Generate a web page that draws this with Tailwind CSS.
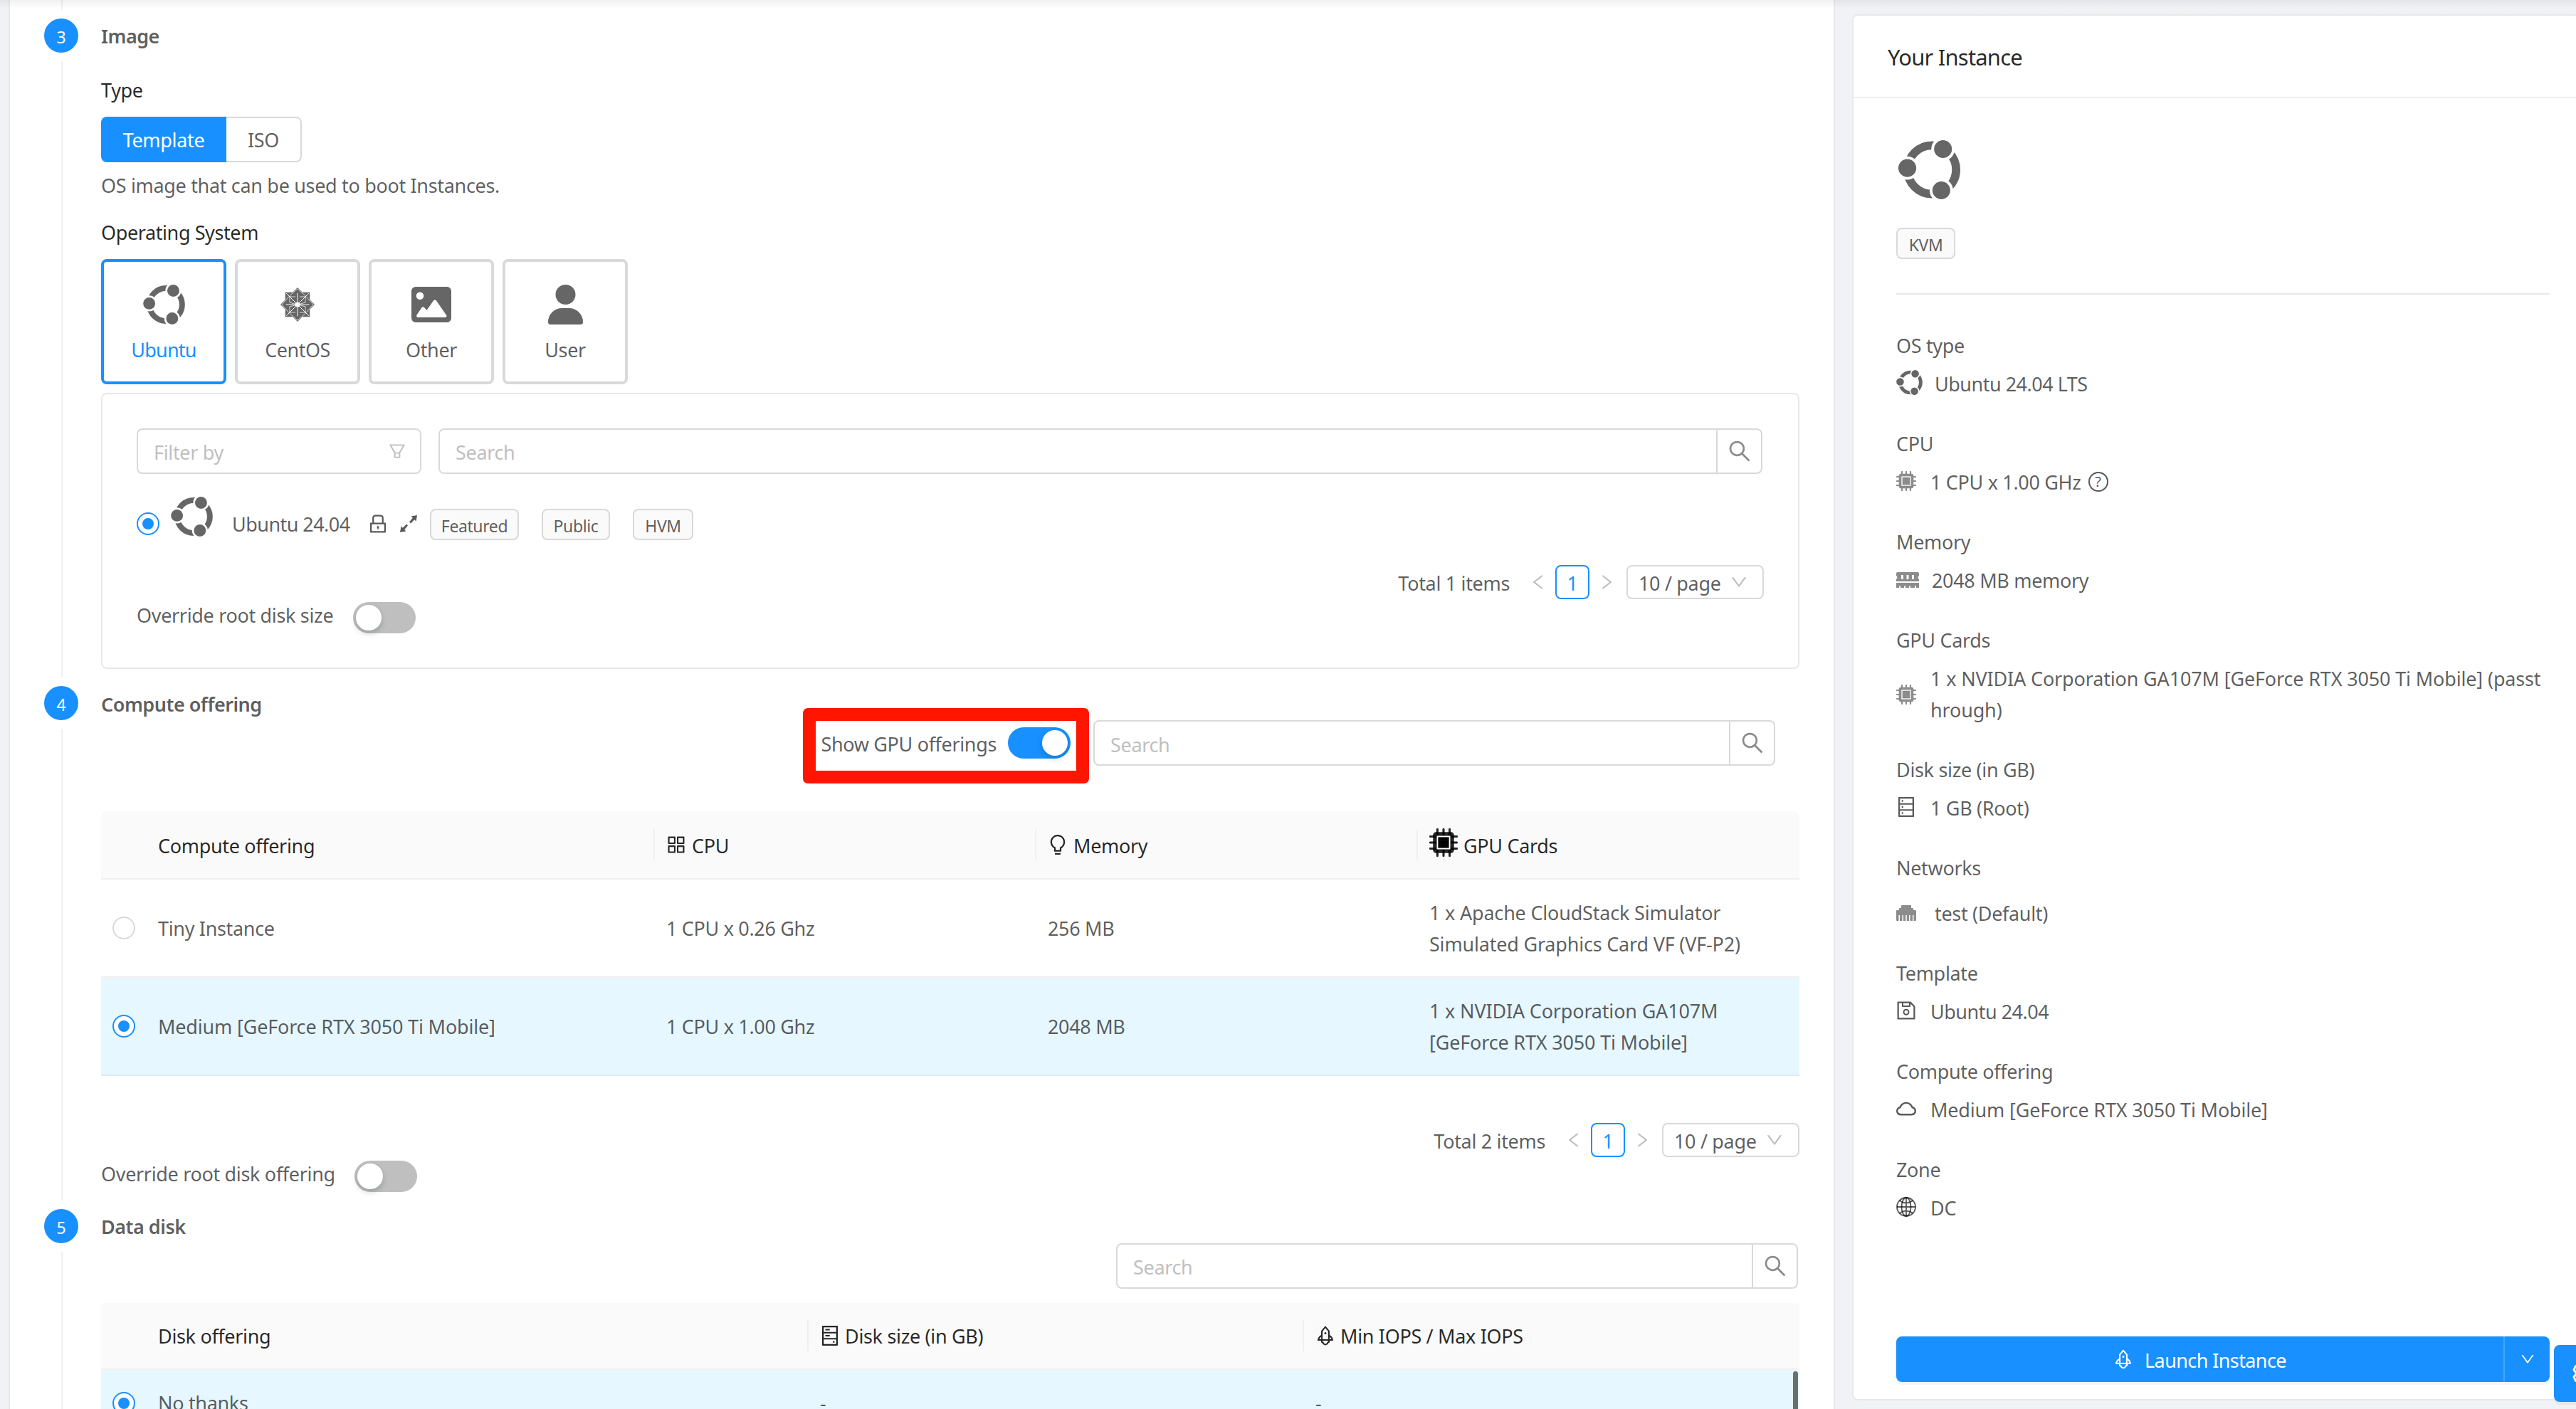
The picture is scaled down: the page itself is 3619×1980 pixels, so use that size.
<!DOCTYPE html>
<html lang="en">

<head>
  <meta charset="UTF-8" />
  <meta name="viewport" content="width=device-width, initial-scale=1.0" />
  <title>New Instance</title>
  <!--Tailwind CSS-->
  <script src="https://cdn.jsdelivr.net/npm/@tailwindcss/browser@4"></script>
</head>

<body
  class="relative flex h-[1980px] w-[3619px] overflow-hidden bg-[#f0f2f5] font-['Noto_Sans','Open_Sans',sans-serif] text-[27px] leading-[44px] tracking-[-0.33px] text-black/65">

  <!-- Icon sprite -->
  <svg class="hidden">
    <symbol id="ubuntu" viewBox="0 0 111 106">
      <circle cx="60" cy="53" r="43.5" fill="none" stroke="currentColor" stroke-width="15" />
      <g fill="currentColor" stroke="#fff" stroke-width="5">
        <circle cx="16" cy="50" r="18.5" />
        <circle cx="80" cy="16" r="18.5" />
        <circle cx="77" cy="90" r="18.5" />
      </g>
    </symbol>
    <symbol id="centos" viewBox="0 0 100 100">
      <path fill="currentColor" d="M50 0 64 14H86V36L100 50 86 64V86H64L50 100 36 86H14V64L0 50 14 36V14H36Z" />
      <g fill="none" stroke="#fff">
        <path d="M50 16V84M16 50H84M17 17 83 83M83 17 17 83" stroke-width="2" />
        <path d="M50 4 27 24V44L50 50 73 44V24ZM50 96 27 76V56L50 50 73 56V76ZM4 50 24 27H44M96 50 76 27H56M4 50 24 73H44M96 50 76 73H56" stroke-width="1.5" />
      </g>
      <circle cx="50" cy="50" r="7" fill="#fff" />
    </symbol>
    <symbol id="picture" viewBox="0 0 56 50">
      <path fill="currentColor" fill-rule="evenodd"
        d="M6 0H50a6 6 0 0 1 6 6V44a6 6 0 0 1-6 6H6a6 6 0 0 1-6-6V6A6 6 0 0 1 6 0ZM12 7.5a5.3 5.3 0 1 0 0 10.6a5.3 5.3 0 1 0 0-10.6ZM9 43H47a2 2 0 0 0 1.8-3.4L35 19.5a2.4 2.4 0 0 0-4 0L21.5 33 18 29a2.4 2.4 0 0 0-3.5.2L7.5 39.6A2.2 2.2 0 0 0 9 43Z" />
    </symbol>
    <symbol id="person" viewBox="0 0 49 56">
      <path fill="currentColor"
        d="M24.5 0a14 14 0 1 1 0 28a14 14 0 1 1 0-28ZM19.5 33h10A19.5 19.5 0 0 1 49 52.5A3.5 3.5 0 0 1 45.5 56H3.5A3.5 3.5 0 0 1 0 52.5A19.5 19.5 0 0 1 19.5 33Z" />
    </symbol>
    <symbol id="chip" viewBox="0 0 84 84">
      <path stroke="currentColor" stroke-width="6.5" stroke-linecap="round" d="M24 3V81M42 3V81M60 3V81M3 24H81M3 42H81M3 60H81" />
      <rect x="11" y="11" width="62" height="62" rx="9" fill="currentColor" />
      <rect x="24" y="24" width="36" height="36" fill="currentColor" stroke="#fff" stroke-width="4" />
    </symbol>
    <symbol id="ram" viewBox="0 0 32 22">
      <path fill="currentColor" fill-rule="evenodd"
        d="M2 0H30A2 2 0 0 1 32 2V5a3 3 0 0 0 0 5V13H0V10A3 3 0 0 0 0 5V2A2 2 0 0 1 2 0ZM7 4V10H10V4ZM14.5 4V10H17.5V4ZM22 4V10H25V4ZM0 15H32V22H28V19.5H26V22H20V19.5H18V22H13V19.5H11V22H6V19.5H4V22H0Z" />
    </symbol>
    <symbol id="ethernet" viewBox="0 0 28 22">
      <path fill="currentColor"
        d="M8 0H20A1 1 0 0 1 21 1V4H23A1 1 0 0 1 24 5V7H27A1 1 0 0 1 28 8V21A1 1 0 0 1 27 22H24.5V14H23V22H19.5V14H18V22H14.8V14H13.2V22H10V14H8.5V22H5V14H3.5V22H1A1 1 0 0 1 0 21V8A1 1 0 0 1 1 7H4V5A1 1 0 0 1 5 4H7V1A1 1 0 0 1 8 0Z" />
    </symbol>
    <symbol id="globe" viewBox="0 0 28 28">
      <g fill="none" stroke="currentColor" stroke-width="1.8">
        <circle cx="14" cy="14" r="13" />
        <ellipse cx="14" cy="14" rx="6.5" ry="13" />
        <path d="M14 1V27M1 14H27M4.5 5Q14 12 23.5 5M4.5 23Q14 16 23.5 23" />
      </g>
    </symbol>
    <symbol id="expand" viewBox="0 0 24 24">
      <path fill="currentColor" d="M24 0 22.5 8.5 20.2 6.2 15 11.4 13 9.4 17.800 3.800 15.500 1.500ZM0 24 1.500 15.500 3.800 17.800 9 12.600 11 14.600 6.200 20.200 8.500 22.500Z" />
    </symbol>
    <symbol id="search" viewBox="64 64 896 896">
      <path fill="currentColor"
        d="M909.6 854.5L649.9 594.8C690.2 542.7 712 479 712 412c0-80.2-31.3-155.4-87.9-212.1-56.6-56.7-132-87.9-212.1-87.9s-155.5 31.3-212.1 87.9C143.2 256.5 112 331.8 112 412c0 80.1 31.3 155.5 87.9 212.1C256.5 680.8 331.8 712 412 712c67 0 130.6-21.8 182.7-62l259.7 259.6a8.2 8.2 0 0011.6 0l43.6-43.5a8.2 8.2 0 000-11.6zM570.4 570.4C528 612.7 471.8 636 412 636s-116-23.3-158.4-65.6C211.3 528 188 471.8 188 412s23.3-116.1 65.6-158.4C296 211.3 352.2 188 412 188s116.1 23.2 158.4 65.6S636 352.2 636 412s-23.3 116.1-65.6 158.4z" />
    </symbol>
    <symbol id="filter" viewBox="64 64 896 896">
      <path fill="currentColor"
        d="M880.1 154H143.9c-24.5 0-39.8 26.7-27.5 48L349 597.4V838c0 17.7 14.2 32 31.8 32h262.4c17.6 0 31.8-14.3 31.8-32V597.4L907.7 202c12.2-21.3-3.1-48-27.6-48zM603.4 798H420.6V642h182.9v156zm9.6-236.6l-9.5 16.6h-183l-9.5-16.6L212.7 226h598.6L613 561.4z" />
    </symbol>
    <symbol id="lock" viewBox="64 64 896 896">
      <path fill="currentColor"
        d="M832 464h-68V240c0-70.7-57.3-128-128-128H388c-70.7 0-128 57.3-128 128v224h-68c-17.7 0-32 14.3-32 32v384c0 17.7 14.3 32 32 32h640c17.7 0 32-14.3 32-32V496c0-17.7-14.3-32-32-32zM332 240c0-30.9 25.1-56 56-56h248c30.9 0 56 25.1 56 56v224H332V240zm460 600H232V536h560v304zM484 701v53c0 4.4 3.6 8 8 8h40c4.4 0 8-3.6 8-8v-53a48.01 48.01 0 10-56 0z" />
    </symbol>
    <symbol id="left" viewBox="64 64 896 896">
      <path fill="currentColor"
        d="M724 218.3V141c0-6.7-7.7-10.4-12.9-6.3L260.3 486.8a31.86 31.86 0 000 50.3l450.8 352.1c5.3 4.1 12.9.4 12.9-6.3v-77.3c0-4.9-2.3-9.6-6.1-12.6l-360-281 360-281.1c3.8-3 6.1-7.7 6.1-12.6z" />
    </symbol>
    <symbol id="right" viewBox="64 64 896 896">
      <path fill="currentColor"
        d="M765.7 486.8L314.9 134.7A7.97 7.97 0 00302 141v77.3c0 4.9 2.3 9.6 6.1 12.6l360 281.1-360 281.1c-3.9 3-6.1 7.7-6.1 12.6V883c0 6.7 7.7 10.4 12.9 6.3l450.8-352.1a31.96 31.96 0 000-50.4z" />
    </symbol>
    <symbol id="down" viewBox="64 64 896 896">
      <path fill="currentColor"
        d="M884 256h-75c-5.1 0-9.9 2.5-12.9 6.6L512 654.2 227.9 262.6c-3-4.1-7.8-6.6-12.9-6.6h-75c-6.5 0-10.3 7.4-6.5 12.7l352.6 486.1c12.8 17.6 39 17.6 51.7 0l352.6-486.1c3.9-5.3.1-12.7-6.4-12.7z" />
    </symbol>
    <symbol id="appstore" viewBox="64 64 896 896">
      <path fill="none" stroke="currentColor" stroke-width="68" stroke-linejoin="round"
        d="M178 178H446V446H178ZM578 178H846V446H578ZM178 578H446V846H178ZM578 578H846V846H578Z" />
    </symbol>
    <symbol id="bulb" viewBox="64 64 896 896">
      <path fill="currentColor"
        d="M632 888H392c-4.4 0-8 3.6-8 8v32c0 17.7 14.3 32 32 32h192c17.7 0 32-14.3 32-32v-32c0-4.4-3.6-8-8-8zM512 64c-181.1 0-328 146.9-328 328 0 121.4 66 227.4 164 284.1V792c0 17.7 14.3 32 32 32h264c17.7 0 32-14.3 32-32V676.1c98-56.7 164-162.7 164-284.1 0-181.1-146.9-328-328-328zm127.9 549.8L604 634.6V752H420V634.6l-35.9-20.8C305.4 568.3 256 484.5 256 392c0-141.4 114.6-256 256-256s256 114.6 256 256c0 92.5-49.4 176.3-128.1 221.8z" />
    </symbol>
    <symbol id="hdd" viewBox="64 64 896 896">
      <path fill="currentColor"
        d="M832 64H192c-17.7 0-32 14.3-32 32v832c0 17.7 14.3 32 32 32h640c17.7 0 32-14.3 32-32V96c0-17.7-14.3-32-32-32zm-600 72h560v208H232V136zm560 480H232V408h560v208zm0 272H232V680h560v208zM496 208H312c-4.4 0-8 3.6-8 8v48c0 4.4 3.6 8 8 8h184c4.4 0 8-3.6 8-8v-48c0-4.4-3.6-8-8-8zM312 544h184c4.4 0 8-3.6 8-8v-48c0-4.4-3.6-8-8-8H312c-4.4 0-8 3.6-8 8v48c0 4.4 3.6 8 8 8zm328 244a40 40 0 1080 0 40 40 0 10-80 0z" />
    </symbol>
    <symbol id="database" viewBox="64 64 896 896">
      <path fill="currentColor"
        d="M832 64H192c-17.7 0-32 14.3-32 32v832c0 17.7 14.3 32 32 32h640c17.7 0 32-14.3 32-32V96c0-17.7-14.3-32-32-32zm-600 72h560v208H232V136zm560 480H232V408h560v208zm0 272H232V680h560v208zM304 240a40 40 0 1080 0 40 40 0 10-80 0zm0 272a40 40 0 1080 0 40 40 0 10-80 0zm0 272a40 40 0 1080 0 40 40 0 10-80 0z" />
    </symbol>
    <symbol id="rocket" viewBox="64 64 896 896">
      <path fill="currentColor"
        d="M864 736c0-111.6-65.4-208-160-252.9V317.3c0-15.1-5.3-29.7-15.1-41.2L536.5 95.4C530.1 87.8 521 84 512 84s-18.1 3.8-24.5 11.4L335.1 276.1a63.97 63.97 0 00-15.1 41.2v165.8C225.4 528 160 624.4 160 736h156.5c-2.3 7.2-3.5 15-3.5 23.8 0 22.1 7.6 43.7 21.4 60.8a97.2 97.2 0 0043.1 30.6c23.1 54 75.6 88.8 134.5 88.8 29.1 0 57.3-8.6 81.4-24.8 23.6-15.8 41.9-37.9 53-64a97 97 0 0043.1-30.5 97.52 97.52 0 0021.4-60.8c0-8.4-1.1-16.4-3.1-23.8H864zM762.3 621.4c9.4 14.6 17 30.3 22.5 46.6H700V558.7a211.6 211.6 0 0162.3 62.7zM388 483.1V318.8l124-147 124 147V668H388V483.1zM239.2 668c5.5-16.3 13.1-32 22.5-46.6 16.3-25.2 37.5-46.5 62.3-62.7V668h-84.8zm388.9 116.2c-5.2 3-11.2 4.2-17.1 3.4l-19.5-2.4-2.8 19.4c-5.4 37.9-38.4 66.5-76.7 66.5-38.3 0-71.3-28.6-76.7-66.5l-2.8-19.5-19.5 2.5a27.7 27.7 0 01-17.1-3.5c-8.7-5-14.1-14.3-14.1-24.4 0-10.6 5.9-19.4 14.6-23.8h231.3c8.8 4.5 14.6 13.3 14.6 23.8-.1 10.2-5.5 19.6-14.2 24.5zM464 400a48 48 0 1096 0 48 48 0 10-96 0z" />
    </symbol>
    <symbol id="save" viewBox="64 64 896 896">
      <path fill="currentColor"
        d="M893.3 293.3L730.7 130.7c-7.5-7.5-16.7-13-26.7-16V112H144c-17.7 0-32 14.3-32 32v736c0 17.7 14.3 32 32 32h736c17.7 0 32-14.3 32-32V338.5c0-17-6.7-33.2-18.7-45.2zM384 184h256v104H384V184zm456 656H184V184h136v136c0 17.7 14.3 32 32 32h320c17.7 0 32-14.3 32-32V205.8l136 136V840zM512 442c-79.5 0-144 64.5-144 144s64.5 144 144 144 144-64.5 144-144-64.5-144-144-144zm0 224c-44.2 0-80-35.8-80-80s35.8-80 80-80 80 35.8 80 80-35.8 80-80 80z" />
    </symbol>
    <symbol id="cloud" viewBox="64 64 896 896">
      <path fill="currentColor"
        d="M811.4 418.7C765.6 297.9 648.9 212 512.2 212S258.8 297.8 213 418.6C127.3 441.1 64 519.1 64 612c0 110.5 89.5 200 199.9 200h496.2C870.5 812 960 722.5 960 612c0-92.7-63.1-170.7-148.6-193.3zm36.3 281a123.07 123.07 0 01-87.6 36.3H263.9c-33.1 0-64.2-12.9-87.6-36.3A123.3 123.3 0 01140 612c0-28 9.1-54.3 26.2-76.3a125.7 125.7 0 0166.1-43.7l37.9-9.9 13.9-36.6c8.6-22.8 20.6-44.1 35.7-63.4a245.6 245.6 0 0152.4-49.9c41.1-28.9 89.5-44.2 140-44.2s98.9 15.3 140 44.2c19.9 14 37.5 30.8 52.4 49.9 15.1 19.3 27.1 40.7 35.7 63.4l13.8 36.5 37.8 10c54.3 14.5 92.1 63.8 92.1 120 0 33.1-12.9 64.3-36.3 87.7z" />
    </symbol>
    <symbol id="gear" viewBox="0 0 40 40">
      <g fill="none" stroke="currentColor" stroke-width="3">
        <path d="M15 3.5H25L26.5 9 30 11 35.5 9.5 38 15 34 20 38 25 35.5 30.5 30 29 26.5 31 25 36.5H15L13.5 31 10 29 4.500 30.500 2 25 6 20 2 15 4.500 9.500 10 11 13.500 9Z" stroke-linejoin="round" />
        <circle cx="20" cy="20" r="6" />
      </g>
    </symbol>
  </svg>

  <!-- Wizard -->
  <main class="ml-3 flex h-[1980px] w-[2566px] shrink-0 flex-col overflow-hidden border-x-2 border-[#e8e8e8] bg-white">
    <div class="ml-[72px] h-[14px] w-0.5 shrink-0 bg-[#f0f0f0]"></div>

    <!-- Step 3 -->
    <section class="mt-3 flex h-[938px] shrink-0 pr-12 pl-12">
      <div class="flex w-12 shrink-0 flex-col items-center">
        <div class="flex size-12 shrink-0 items-center justify-center rounded-full bg-[#1890ff] pt-1 text-[23px] text-white">3</div>
        <div class="my-3 w-0.5 grow translate-x-px bg-[#f0f0f0]"></div>
      </div>
      <div class="ml-8 w-[2386px] pt-[2.5px]">
        <h3 class="font-semibold tracking-[-0.5px]">Image</h3>
        <div class="mt-8 text-black/85">Type</div>
        <div class="mt-[15.5px] flex h-16">
          <button class="w-[176px] rounded-l-lg bg-[#1890ff] pt-0.5 text-white">Template</button>
          <button class="w-[106px] rounded-r-lg border-2 border-l-0 border-[#d9d9d9] pt-0.5">ISO</button>
        </div>
        <p class="mt-[10.5px]">OS image that can be used to boot Instances.</p>
        <div class="mt-[22px] tracking-[-0.4px] text-black/85">Operating System</div>
        <div class="mt-[15.5px] flex gap-3">
          <div class="flex size-[176px] flex-col items-center rounded-lg border-4 border-[#1890ff] pt-8">
            <svg class="h-14 w-[59px] text-[#666]"><use href="#ubuntu" /></svg>
            <span class="mt-3.5 tracking-[-0.8px] text-[#1890ff]">Ubuntu</span>
          </div>
          <div class="flex size-[176px] flex-col items-center rounded-lg border-4 border-[#d9d9d9] pt-8">
            <svg class="my-1 size-12 text-[#666]"><use href="#centos" /></svg>
            <span class="mt-3.5 tracking-[-0.5px]">CentOS</span>
          </div>
          <div class="flex size-[176px] flex-col items-center rounded-lg border-4 border-[#d9d9d9] pt-8">
            <svg class="my-[3px] h-[50px] w-14 text-[#666]"><use href="#picture" /></svg>
            <span class="mt-3.5">Other</span>
          </div>
          <div class="flex size-[176px] flex-col items-center rounded-lg border-4 border-[#d9d9d9] pt-8">
            <svg class="h-14 w-[49px] text-[#666]"><use href="#person" /></svg>
            <span class="mt-3.5">User</span>
          </div>
        </div>

        <div class="mt-3 h-[388px] rounded-lg border-2 border-[#e8e8e8] px-12 pt-12">
          <div class="flex gap-6">
            <div class="flex h-16 w-[400px] items-center justify-between rounded-lg border-2 border-[#d9d9d9] pr-5 pl-[22px] text-[#bfbfbf]">
              <span class="pt-1">Filter by</span>
              <svg class="size-6"><use href="#filter" /></svg>
            </div>
            <div class="flex h-16 w-[1860px] rounded-lg border-2 border-[#d9d9d9]">
              <span class="grow pt-2.5 pl-[22px] text-[#bfbfbf]">Search</span>
              <div class="flex w-[63px] items-center justify-center border-l-2 border-[#d9d9d9] text-black/45">
                <svg class="size-8"><use href="#search" /></svg>
              </div>
            </div>
          </div>
          <div class="mt-8 flex h-24 items-start">
            <div class="mt-[22px] flex size-8 shrink-0 items-center justify-center rounded-full border-2 border-[#1890ff]">
              <div class="size-4 rounded-full bg-[#1890ff]"></div>
            </div>
            <svg class="ml-4 h-14 w-[59px] text-[#666]"><use href="#ubuntu" /></svg>
            <span class="mt-[17px] ml-[27px] w-[167px] tracking-[-0.55px] whitespace-nowrap">Ubuntu 24.04</span>
            <svg class="mt-6 ml-6 size-7"><use href="#lock" /></svg>
            <svg class="mt-[26px] ml-[17px] size-6"><use href="#expand" /></svg>
            <span class="mt-[17px] ml-[18px] h-11 w-[125px] rounded-lg border-2 border-[#d9d9d9] bg-[#fafafa] pt-0.5 text-center text-[23px] leading-10 tracking-[-0.4px]">Featured</span>
            <span class="mt-[17px] ml-8 h-11 w-24 rounded-lg border-2 border-[#d9d9d9] bg-[#fafafa] pt-0.5 text-center text-[23px] leading-10 tracking-[-0.4px]">Public</span>
            <span class="mt-[17px] ml-8 h-11 w-[85px] rounded-lg border-2 border-[#d9d9d9] bg-[#fafafa] pt-0.5 text-center text-[23px] leading-10 tracking-[-0.4px]">HVM</span>
          </div>
          <div class="flex h-12 items-center justify-end">
            <span class="mr-4 pt-1">Total 1 items</span>
            <span class="flex w-12 justify-center text-black/25"><svg class="size-6"><use href="#left" /></svg></span>
            <span class="h-12 w-12 rounded-lg border-2 border-[#1890ff] pt-0.5 text-center text-[#1890ff]">1</span>
            <span class="flex w-12 justify-center text-black/25"><svg class="size-6"><use href="#right" /></svg></span>
            <span class="ml-1 flex h-12 w-[193px] items-center justify-between rounded-lg border-2 border-[#d9d9d9] pr-[21px] pl-[15px]">
              <span class="pt-1">10 / page</span><svg class="size-6 text-black/25"><use href="#down" /></svg>
            </span>
          </div>
          <div class="flex">
            <span class="w-[304px] pt-px">Override root disk size</span>
            <span class="mt-1 h-11 w-[88px] rounded-full bg-black/25 p-1">
              <span class="block size-9 rounded-full bg-white shadow-[0_4px_8px_rgba(0,35,11,0.2)]"></span>
            </span>
          </div>
        </div>
      </div>
    </section>

    <!-- Step 4 -->
    <section class="flex h-[735px] shrink-0 pr-12 pl-12">
      <div class="flex w-12 shrink-0 flex-col items-center">
        <div class="flex size-12 shrink-0 items-center justify-center rounded-full bg-[#1890ff] pt-1 text-[23px] text-white">4</div>
        <div class="my-3 w-0.5 grow translate-x-px bg-[#f0f0f0]"></div>
      </div>
      <div class="ml-8 w-[2386px] pt-1">
        <h3 class="font-semibold tracking-[-0.5px]">Compute offering</h3>
        <div class="relative flex h-16 items-center justify-end pr-[34px]">
          <div class="absolute top-[-17px] left-[986px] h-[106px] w-[402px] rounded-[7px] border-[18px] border-[#ff1500]"></div>
          <span class="mr-4 pt-1 tracking-[-0.35px]">Show GPU offerings</span>
          <span class="mr-8 flex h-11 w-[88px] justify-end rounded-full bg-[#1890ff] p-1">
            <span class="block size-9 rounded-full bg-white shadow-[0_4px_8px_rgba(0,35,11,0.2)]"></span>
          </span>
          <div class="flex h-16 w-[958px] rounded-lg border-2 border-[#d9d9d9]">
            <span class="grow pt-[11px] pl-[22px] text-[#bfbfbf]">Search</span>
            <div class="flex w-[63px] items-center justify-center border-l-2 border-[#d9d9d9] text-black/45">
              <svg class="size-8"><use href="#search" /></svg>
            </div>
          </div>
        </div>

        <div class="mt-16">
          <div class="grid h-24 grid-cols-[64px_714px_536px_536px_536px] items-center rounded-t-lg border-b-2 border-[#f0f0f0] bg-[#fafafa] text-black/85">
            <span></span>
            <div class="flex h-11 items-center border-r-2 border-[#f0f0f0] pt-1 pl-4">Compute offering</div>
            <div class="flex h-11 items-center border-r-2 border-[#f0f0f0] pl-4"><svg class="mr-2 size-7"><use href="#appstore" /></svg><span class="pt-1">CPU</span></div>
            <div class="flex h-11 items-center border-r-2 border-[#f0f0f0] pl-4"><svg class="mr-2 size-7"><use href="#bulb" /></svg><span class="pt-1">Memory</span></div>
            <div class="flex h-11 items-center pl-4"><svg class="mr-2 mb-1.5 size-10"><use href="#chip" /></svg><span class="pt-1">GPU Cards</span></div>
          </div>
          <div class="grid h-[138px] grid-cols-[64px_714px_536px_536px_536px] items-center border-b-2 border-[#f0f0f0]">
            <div class="ml-4 size-8 rounded-full border-2 border-[#d9d9d9]"></div>
            <div class="pt-0.5 pl-4">Tiny Instance</div>
            <div class="pt-0.5 pl-4">1 CPU x 0.26 Ghz</div>
            <div class="pt-0.5 pl-4">256 MB</div>
            <div class="pt-0.5 pl-4 tracking-[-0.2px]">1 x Apache CloudStack Simulator<br>Simulated Graphics Card VF (VF-P2)</div>
          </div>
          <div class="grid h-[138px] grid-cols-[64px_714px_536px_536px_536px] items-center border-b-2 border-[#dcebf5] bg-[#e6f7ff]">
            <div class="ml-4 flex size-8 items-center justify-center rounded-full border-2 border-[#1890ff] bg-white">
              <div class="size-4 rounded-full bg-[#1890ff]"></div>
            </div>
            <div class="pt-0.5 pl-4 tracking-[-0.18px]">Medium [GeForce RTX 3050 Ti Mobile]</div>
            <div class="pt-0.5 pl-4">1 CPU x 1.00 Ghz</div>
            <div class="pt-0.5 pl-4">2048 MB</div>
            <div class="pt-0.5 pl-4 tracking-[-0.18px]">1 x NVIDIA Corporation GA107M<br>[GeForce RTX 3050 Ti Mobile]</div>
          </div>
        </div>

        <div class="mt-[66px] flex h-12 items-center justify-end">
          <span class="mr-4 pt-1">Total 2 items</span>
          <span class="flex w-12 justify-center text-black/25"><svg class="size-6"><use href="#left" /></svg></span>
          <span class="h-12 w-12 rounded-lg border-2 border-[#1890ff] pt-0.5 text-center text-[#1890ff]">1</span>
          <span class="flex w-12 justify-center text-black/25"><svg class="size-6"><use href="#right" /></svg></span>
          <span class="ml-1 flex h-12 w-[193px] items-center justify-between rounded-lg border-2 border-[#d9d9d9] pr-[21px] pl-[15px]">
            <span class="pt-1">10 / page</span><svg class="size-6 text-black/25"><use href="#down" /></svg>
          </span>
        </div>
        <div class="mt-px flex">
          <span class="w-[356px] pt-px">Override root disk offering</span>
          <span class="mt-1 h-11 w-[88px] rounded-full bg-black/25 p-1">
            <span class="block size-9 rounded-full bg-white shadow-[0_4px_8px_rgba(0,35,11,0.2)]"></span>
          </span>
        </div>
      </div>
    </section>

    <!-- Step 5 -->
    <section class="flex h-[281px] shrink-0 pr-12 pl-12">
      <div class="flex w-12 shrink-0 flex-col items-center">
        <div class="flex size-12 shrink-0 items-center justify-center rounded-full bg-[#1890ff] pt-1 text-[23px] text-white">5</div>
        <div class="mt-3 w-0.5 grow translate-x-px bg-[#f0f0f0]"></div>
      </div>
      <div class="ml-8 w-[2386px] overflow-hidden pt-[2.5px]">
        <h3 class="font-semibold tracking-[-0.5px]">Data disk</h3>
        <div class="mt-[1.5px] flex justify-end pr-0.5">
          <div class="flex h-16 w-[958px] rounded-lg border-2 border-[#d9d9d9]">
            <span class="grow pt-2.5 pl-[22px] text-[#bfbfbf]">Search</span>
            <div class="flex w-[63px] items-center justify-center border-l-2 border-[#d9d9d9] text-black/45">
              <svg class="size-8"><use href="#search" /></svg>
            </div>
          </div>
        </div>
        <div class="relative mt-5">
          <div class="grid h-[94px] grid-cols-[64px_930px_696px_696px] items-center rounded-t-lg border-b-2 border-[#f0f0f0] bg-[#fafafa] text-black/85">
            <span></span>
            <div class="flex h-11 items-center border-r-2 border-[#f0f0f0] pt-0.5 pl-4">Disk offering</div>
            <div class="flex h-11 items-center border-r-2 border-[#f0f0f0] pl-4"><svg class="mr-[7px] size-7"><use href="#hdd" /></svg><span class="pt-0.5">Disk size (in GB)</span></div>
            <div class="flex h-11 items-center pl-4"><svg class="mr-[7px] size-7"><use href="#rocket" /></svg><span class="pt-0.5">Min IOPS / Max IOPS</span></div>
          </div>
          <div class="grid h-[94px] grid-cols-[64px_930px_696px_696px] items-center bg-[#e6f7ff]">
            <div class="ml-4 flex size-8 items-center justify-center rounded-full border-2 border-[#1890ff] bg-white">
              <div class="size-4 rounded-full bg-[#1890ff]"></div>
            </div>
            <div class="pl-4">No thanks</div>
            <div class="pl-4">-</div>
            <div class="pl-4">-</div>
          </div>
          <div class="absolute top-24 right-0.5 h-20 w-[7px] rounded-t-full bg-[#6b6f72]"></div>
        </div>
      </div>
    </section>
  </main>

  <!-- Instance summary -->
  <aside class="mt-5 ml-6 flex h-[1948px] w-[1042px] shrink-0 flex-col rounded-lg border-2 border-[#e8e8e8] bg-white">
    <h2 class="h-[116px] shrink-0 border-b-2 border-[#f0f0f0] pt-[34px] pl-12 text-[31px] leading-[48px] tracking-[-0.8px] text-black/85">Your Instance</h2>
    <div class="flex w-[978px] grow flex-col px-[60px] pt-[58px]">
      <svg class="ml-[3px] h-[85px] w-[87px] shrink-0 text-[#666]"><use href="#ubuntu" /></svg>
      <span class="mt-[39px] h-11 w-[83px] shrink-0 rounded-lg border-2 border-[#d9d9d9] bg-[#fafafa] pt-0.5 text-center text-[23px] leading-10 tracking-[-0.4px]">KVM</span>
      <div class="mt-12 h-0.5 w-[918px] shrink-0 bg-[#e8e8e8]"></div>

      <div class="mt-[50px] mb-10">
        <div>OS type</div>
        <div class="mt-2.5 flex items-start whitespace-nowrap tracking-[-0.5px]"><svg class="mt-0.5 mr-[17px] h-[35px] w-[37px] shrink-0 text-[#666]"><use href="#ubuntu" /></svg>Ubuntu 24.04 LTS</div>
      </div>
      <div class="mb-10">
        <div>CPU</div>
        <div class="mt-2.5 flex items-start whitespace-nowrap"><svg class="mt-1.5 mr-5 size-7 shrink-0 text-[#8c8c8c]"><use href="#chip" /></svg>1 CPU x 1.00 GHz
          <span class="mt-[7px] ml-2.5 flex size-7 items-center justify-center rounded-full border-[2.5px] border-[#595959] text-[20px] leading-5 tracking-normal text-[#595959]">?</span>
        </div>
      </div>
      <div class="mb-10">
        <div>Memory</div>
        <div class="mt-2.5 flex items-start whitespace-nowrap"><svg class="mt-2.5 mr-[18px] h-[22px] w-8 shrink-0 text-[#8c8c8c]"><use href="#ram" /></svg>2048 MB memory</div>
      </div>
      <div class="mb-10">
        <div>GPU Cards</div>
        <div class="mt-2.5 flex items-center whitespace-nowrap tracking-[-0.16px]"><svg class="mr-5 size-7 shrink-0 text-[#8c8c8c]"><use href="#chip" /></svg><span>1 x NVIDIA Corporation GA107M [GeForce RTX 3050 Ti Mobile] (passt<br>hrough)</span></div>
      </div>
      <div class="mb-10">
        <div>Disk size (in GB)</div>
        <div class="mt-2.5 flex items-start whitespace-nowrap"><svg class="mt-1.5 mr-5 size-7 shrink-0"><use href="#database" /></svg>1 GB (Root)</div>
      </div>
      <div class="mb-10">
        <div>Networks</div>
        <div class="mt-5 flex items-start whitespace-nowrap"><svg class="mt-2.5 mr-[26px] h-[22px] w-7 shrink-0 text-[#8c8c8c]"><use href="#ethernet" /></svg>test (Default)</div>
      </div>
      <div class="mb-10">
        <div>Template</div>
        <div class="mt-2.5 flex items-start tracking-[-0.5px] whitespace-nowrap"><svg class="mt-1.5 mr-5 size-7 shrink-0"><use href="#save" /></svg>Ubuntu 24.04</div>
      </div>
      <div class="mb-10">
        <div>Compute offering</div>
        <div class="mt-2.5 flex items-start whitespace-nowrap tracking-[-0.18px]"><svg class="mt-1.5 mr-5 size-7 shrink-0"><use href="#cloud" /></svg>Medium [GeForce RTX 3050 Ti Mobile]</div>
      </div>
      <div>
        <div>Zone</div>
        <div class="mt-2.5 flex items-start whitespace-nowrap"><svg class="mt-1.5 mr-5 size-7 shrink-0"><use href="#globe" /></svg>DC</div>
      </div>

      <div class="mt-auto mb-6 flex h-16 w-[918px] rounded-lg bg-[#1890ff] text-white shadow-[0_4px_0_rgba(0,0,0,0.04)]">
        <button class="flex grow items-center justify-center border-r-2 border-[#40a9ff]">
          <svg class="mr-4 size-7"><use href="#rocket" /></svg><span class="pt-1 tracking-[-0.6px]">Launch Instance</span>
        </button>
        <button class="flex w-[63px] items-center justify-center"><svg class="size-5"><use href="#down" /></svg></button>
      </div>
    </div>
  </aside>

  <!-- Settings handle -->
  <div class="absolute top-[1890px] right-0 flex h-20 w-[31px] items-center overflow-hidden rounded-l-lg bg-[#1890ff] pl-[26px] text-white shadow-[0_4px_0_rgba(0,0,0,0.04)]">
    <svg class="size-10 shrink-0"><use href="#gear" /></svg>
  </div>

  <!-- Shadow cast by the page header -->
  <div class="absolute inset-x-0 top-0 h-3 bg-gradient-to-b from-black/6 to-transparent"></div>
</body>

</html>
